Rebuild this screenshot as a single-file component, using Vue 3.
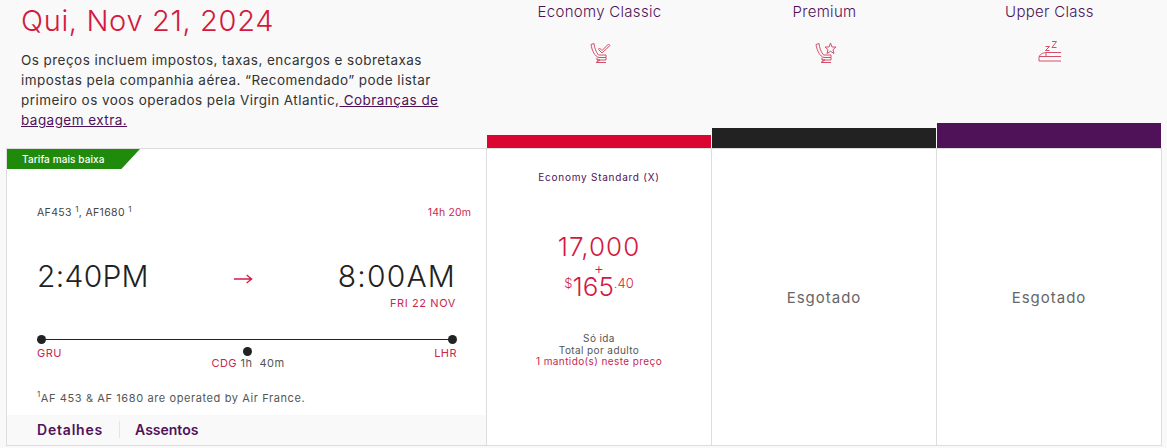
<script setup>
const cabins = [
  { name: 'Economy Classic', bar: 'red', icon: 'check' },
  { name: 'Premium', bar: 'black', icon: 'star' },
  { name: 'Upper Class', bar: 'purple', icon: 'bed' }
]
</script>

<template>
  <div class="page">
    <div class="head">
      <div class="intro">
        <h1>Qui, Nov 21, 2024</h1>
        <p>
          Os preços incluem impostos, taxas, encargos e sobretaxas impostas pela companhia aérea.
          “Recomendado” pode listar primeiro os voos operados pela Virgin Atlantic,<a href="#"> Cobranças de bagagem extra.</a>
        </p>
      </div>
      <div v-for="c in cabins" :key="c.name" class="cabin">
        <div class="cabin-name">{{ c.name }}</div>
        <svg class="cabin-icon" width="24" height="24" viewBox="0 0 24 24" fill="none" stroke="#d4506a" stroke-width="1">
          <template v-if="c.icon !== 'bed'">
            <path d="M3 3.5 L6 2.5 C6.5 7 8 11 10.5 14 L18 14 L18 16.5 L11 16.5 C7 15.5 4 10 3 3.5Z" />
            <path d="M9 16.5 L9 19 L12 19 L8 21.5 L18 21.5 M9 19 L18 19 L18 16.5" />
          </template>
          <path v-if="c.icon === 'check'" d="M11.5 7 L14 9.5 L20.5 3 L22 4.5 L14 12 L10.5 8.5Z" />
          <path v-if="c.icon === 'star'" d="M17.5 2 L19 6 L23 6 L20 8.7 L21 12.5 L17.5 10.3 L14 12.5 L15 8.7 L12 6 L16 6Z" />
          <template v-if="c.icon === 'bed'">
            <path d="M1 20 L1 17 C1 13.5 4.5 12 8 11.5 L8 15.5 M1 15.5 L23 15.5 M8 11.5 L23 11.5 M1 20 L23 20" />
            <path d="M7.5 5.5 L11.5 5.5 L7.5 9.5 L11.5 9.5 M14 0.5 L18.5 0.5 L14 6.5 L18.5 6.5" />
          </template>
        </svg>
        <div class="cabin-bar" :class="c.bar"></div>
      </div>
    </div>

    <div class="body">
      <div class="flight">
        <div class="flag">Tarifa mais baixa</div>
        <div class="codes">
          <span>AF453 <sup>1</sup>, AF1680 <sup>1</sup></span>
          <span class="red duration">14h 20m</span>
        </div>
        <div class="times">
          <span class="depart">2:40PM</span>
          <svg width="20" height="12" viewBox="0 0 22 12" fill="none" stroke="#d31d48" stroke-width="1.5">
            <path d="M1 6 H20 M15 1.5 L20.5 6 L15 10.5" />
          </svg>
          <span class="arrive">8:00AM</span>
        </div>
        <div class="arrive-date">FRI 22 NOV</div>
        <div class="route">
          <div class="stop"><i></i><span class="red">GRU</span></div>
          <div class="stop mid"><i></i><span><span class="red">CDG</span> 1h&nbsp; 40m</span></div>
          <div class="stop end"><i></i><span class="red">LHR</span></div>
        </div>
        <div class="note"><sup>1</sup>AF 453 &amp; AF 1680 are operated by Air France.</div>
        <div class="links">
          <a href="#">Detalhes</a>
          <a href="#">Assentos</a>
        </div>
      </div>

      <div class="fare">
        <div class="fare-name">Economy Standard (X)</div>
        <div class="miles">17,000</div>
        <div class="plus">+</div>
        <div class="price"><small>$</small>165<small class="cents">.40</small></div>
        <div class="fare-info">
          <div>Só ida</div>
          <div>Total por adulto</div>
          <div class="red">1 mantido(s) neste preço</div>
        </div>
      </div>
      <div class="fare sold">Esgotado</div>
      <div class="fare sold">Esgotado</div>
    </div>
  </div>
</template>

<style>
html, body {
  background: #f9f9f9;
}
</style>

<style scoped>
.page {
  width: 1167px;
  height: 448px;
  overflow: hidden;
  font-family: "Inter", "Liberation Sans", sans-serif;
  color: #222;
}
.red {
  color: #c8284f;
}
.head {
  display: flex;
  height: 148px;
  padding-left: 6px;
}
.intro {
  width: 481px;
  padding-left: 15px;
  box-sizing: border-box;
}
h1 {
  margin: 4px 0 0;
  font-size: 29px;
  line-height: 34px;
  font-weight: 300;
  letter-spacing: 0.65px;
  color: #d3193f;
}
p {
  margin: 12px 0 0;
  width: 425px;
  font-size: 13.5px;
  line-height: 20px;
  letter-spacing: 0.45px;
  color: #333;
}
p a {
  color: #4f1259;
  text-decoration: underline;
}
.cabin {
  width: 225px;
  display: flex;
  flex-direction: column;
  align-items: center;
}
.cabin-name {
  margin-top: 3px;
  font-size: 15px;
  line-height: 18px;
  font-weight: 300;
  letter-spacing: 0.3px;
  color: #4f1259;
}
.cabin-icon {
  margin-top: 20px;
}
.cabin-bar {
  margin-top: auto;
  width: 224px;
  margin-right: 1px;
}
.cabin-bar.red {
  height: 13px;
  background: #da0530;
}
.cabin-bar.black {
  height: 20px;
  background: #222;
}
.cabin-bar.purple {
  height: 25px;
  background: #4f1259;
}
.body {
  display: flex;
  margin-left: 6px;
  width: 1156px;
  height: 298px;
  box-sizing: border-box;
  border: 1px solid #ddd;
  background: #fff;
}
.flight {
  position: relative;
  width: 480px;
  display: flex;
  flex-direction: column;
  border-right: 1px solid #ddd;
  box-sizing: border-box;
  padding-top: 57px;
}
.flag {
  position: absolute;
  left: 0;
  top: 0;
  width: 133px;
  height: 20px;
  padding-left: 15px;
  box-sizing: border-box;
  background: #1f8a0b;
  clip-path: polygon(0 0, 100% 0, 86% 100%, 0 100%);
  color: #fff;
  font-size: 10px;
  font-weight: 500;
  letter-spacing: 0.1px;
  line-height: 20px;
}
.codes {
  display: flex;
  justify-content: space-between;
  padding: 0 15px 0 30px;
  font-size: 10.5px;
  line-height: 14px;
  letter-spacing: 0.35px;
  color: #444;
}
.duration {
  letter-spacing: 0.1px;
}
sup {
  font-size: 8px;
  line-height: 0;
}
.times {
  display: flex;
  justify-content: space-between;
  align-items: center;
  margin-top: 38px;
  padding: 0 30px;
  font-size: 30px;
  line-height: 36px;
  font-weight: 300;
}
.depart {
  letter-spacing: 0.3px;
}
.arrive {
  letter-spacing: 1.2px;
}
.times svg {
  margin-top: 6px;
}
.arrive-date {
  padding-right: 30px;
  text-align: right;
  font-size: 11px;
  line-height: 14px;
  letter-spacing: 0.6px;
  color: #c8284f;
  margin-top: 2px;
}
.route {
  position: relative;
  display: flex;
  justify-content: space-between;
  margin: 25px 29px 0 30px;
  height: 38px;
  font-size: 11px;
  line-height: 13px;
  letter-spacing: 0.45px;
  color: #555;
}
.route::before {
  content: "";
  position: absolute;
  left: 4px;
  right: 4px;
  top: 4px;
  height: 1px;
  background: #222;
}
.stop {
  position: relative;
  display: flex;
  flex-direction: column;
  align-items: flex-start;
  gap: 3px;
}
.stop i {
  width: 9px;
  height: 9px;
  border-radius: 50%;
  background: #222;
}
.stop.mid {
  margin-top: 12px;
  align-items: center;
  gap: 1px;
}
.stop.end {
  align-items: flex-end;
}
.note {
  margin: 18px 0 0;
  padding-left: 30px;
  font-size: 11px;
  line-height: 14px;
  letter-spacing: 0.6px;
  color: #555;
}
.links {
  margin-top: auto;
  height: 30px;
  display: flex;
  align-items: center;
  padding: 0 0 2px 30px;
  box-sizing: border-box;
  background: #f9f9f9;
  font-size: 14px;
  font-weight: 600;
  letter-spacing: 0.8px;
}
.links a {
  color: #4f1259;
  text-decoration: none;
}
.links a + a {
  margin-left: 16px;
  padding-left: 15px;
  border-left: 1px solid #e4e4e4;
  letter-spacing: 0;
}
.fare {
  width: 225px;
  border-right: 1px solid #ddd;
  box-sizing: border-box;
  display: flex;
  flex-direction: column;
  align-items: center;
  padding-top: 21px;
}
.fare:last-child {
  border-right: 0;
  width: 224px;
}
.fare-name {
  font-size: 10px;
  line-height: 14px;
  letter-spacing: 0.75px;
  color: #4f1259;
}
.miles {
  margin-top: 50px;
  font-size: 26px;
  line-height: 26px;
  font-weight: 300;
  letter-spacing: 1px;
  color: #d3193f;
}
.plus {
  margin-top: 3px;
  font-size: 15px;
  line-height: 12px;
  font-weight: 300;
  color: #d3193f;
}
.price {
  margin-top: 3px;
  font-size: 26px;
  line-height: 18px;
  color: #d3193f;
  font-weight: 300;
}
.price small {
  font-size: 13px;
  line-height: 0;
  vertical-align: 8px;
}
.fare-info {
  margin-top: 37px;
  font-size: 10px;
  line-height: 11.5px;
  letter-spacing: 0.4px;
  color: #555;
  text-align: center;
}
.sold {
  justify-content: center;
  padding-top: 0;
  font-size: 15px;
  letter-spacing: 1px;
  color: #666;
}
</style>
